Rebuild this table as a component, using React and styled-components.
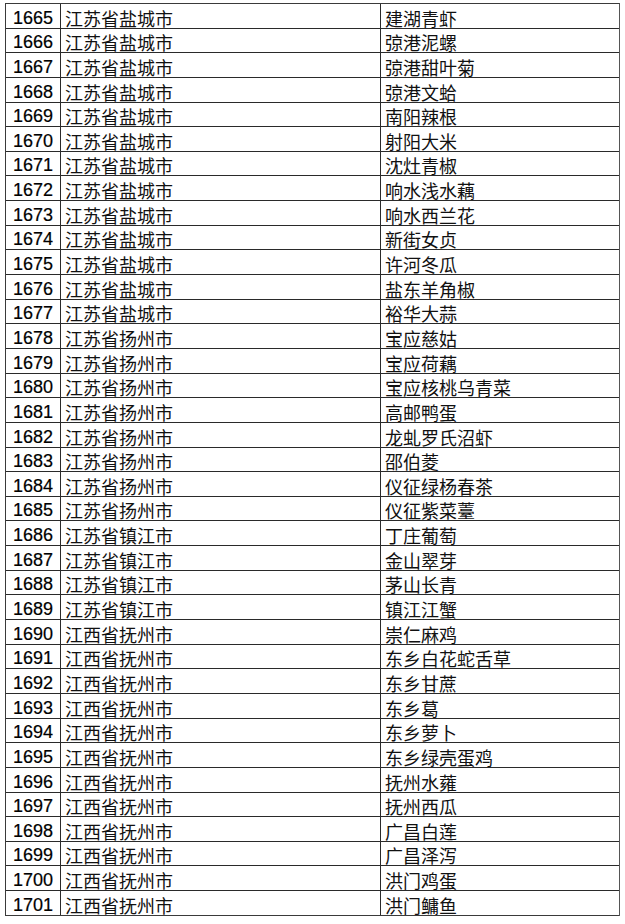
import React from 'react';
import styled, { createGlobalStyle } from 'styled-components';

const GlobalStyle = createGlobalStyle`
    html, body {
        margin: 0;
        padding: 0;
        background: #ffffff;
    }
`;

const rows = [
    [1665, '江苏省盐城市', '建湖青虾'],
    [1666, '江苏省盐城市', '弶港泥螺'],
    [1667, '江苏省盐城市', '弶港甜叶菊'],
    [1668, '江苏省盐城市', '弶港文蛤'],
    [1669, '江苏省盐城市', '南阳辣根'],
    [1670, '江苏省盐城市', '射阳大米'],
    [1671, '江苏省盐城市', '沈灶青椒'],
    [1672, '江苏省盐城市', '响水浅水藕'],
    [1673, '江苏省盐城市', '响水西兰花'],
    [1674, '江苏省盐城市', '新街女贞'],
    [1675, '江苏省盐城市', '许河冬瓜'],
    [1676, '江苏省盐城市', '盐东羊角椒'],
    [1677, '江苏省盐城市', '裕华大蒜'],
    [1678, '江苏省扬州市', '宝应慈姑'],
    [1679, '江苏省扬州市', '宝应荷藕'],
    [1680, '江苏省扬州市', '宝应核桃乌青菜'],
    [1681, '江苏省扬州市', '高邮鸭蛋'],
    [1682, '江苏省扬州市', '龙虬罗氏沼虾'],
    [1683, '江苏省扬州市', '邵伯菱'],
    [1684, '江苏省扬州市', '仪征绿杨春茶'],
    [1685, '江苏省扬州市', '仪征紫菜薹'],
    [1686, '江苏省镇江市', '丁庄葡萄'],
    [1687, '江苏省镇江市', '金山翠芽'],
    [1688, '江苏省镇江市', '茅山长青'],
    [1689, '江苏省镇江市', '镇江江蟹'],
    [1690, '江西省抚州市', '崇仁麻鸡'],
    [1691, '江西省抚州市', '东乡白花蛇舌草'],
    [1692, '江西省抚州市', '东乡甘蔗'],
    [1693, '江西省抚州市', '东乡葛'],
    [1694, '江西省抚州市', '东乡萝卜'],
    [1695, '江西省抚州市', '东乡绿壳蛋鸡'],
    [1696, '江西省抚州市', '抚州水蕹'],
    [1697, '江西省抚州市', '抚州西瓜'],
    [1698, '江西省抚州市', '广昌白莲'],
    [1699, '江西省抚州市', '广昌泽泻'],
    [1700, '江西省抚州市', '洪门鸡蛋'],
    [1701, '江西省抚州市', '洪门鳙鱼'],
];

const App = () => {
    return (
        <>
            <GlobalStyle />
            <Sheet>
                {rows.map(([no, region, product]) => (
                    <Row key={no}>
                        <NumCell>{no}</NumCell>
                        <TextCell>{region}</TextCell>
                        <TextCell $last>{product}</TextCell>
                    </Row>
                ))}
            </Sheet>
        </>
    );
};

const Sheet = styled.div`
    margin: 3px 0 0 5px;
    width: 615px;
    border-top: 1.5px solid #3a3a3a;
    border-left: 1.5px solid #3a3a3a;
    border-right: 1.5px solid #555555;
    box-sizing: border-box;
`;

const Row = styled.div`
    display: grid;
    grid-template-columns: 55px 320px 1fr;
    height: 24.65px;
    box-sizing: border-box;
    border-bottom: 1px solid #2a2a2a;

    &:last-child {
        border-bottom: 1.5px solid #3a3a3a;
    }
`;

const NumCell = styled.div`
    display: flex;
    align-items: flex-end;
    justify-content: center;
    padding-bottom: 1px;
    border-right: 1px solid #2a2a2a;
    font-family: "Liberation Sans", Arial, sans-serif;
    font-size: 18px;
    line-height: 18px;
    color: #000000;
    -webkit-text-stroke: 0.2px #000000;
`;

const TextCell = styled.div`
    display: flex;
    align-items: flex-end;
    padding: 0 0 0 4px;
    border-right: ${props => props.$last ? 'none' : '1px solid #2a2a2a'};
    font-family: "Noto Sans CJK SC", sans-serif;
    font-size: 18px;
    line-height: 20px;
    color: #111111;
    white-space: nowrap;
`;

export default App;
